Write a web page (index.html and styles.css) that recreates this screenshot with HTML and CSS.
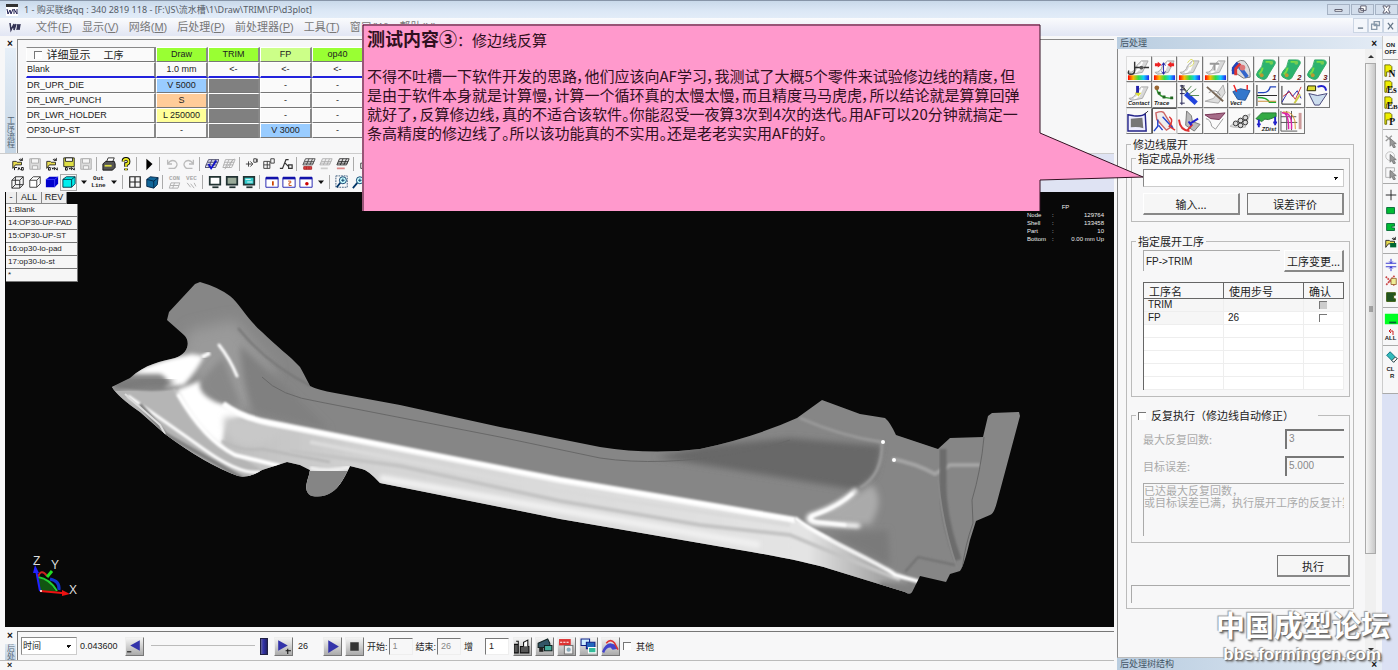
FILE: index.html
```html
<!DOCTYPE html>
<html lang="zh-CN">
<head>
<meta charset="utf-8">
<title>d3plot</title>
<link rel="stylesheet" href="styles.css">
</head>
<body>
<svg class="defs" aria-hidden="true">
  <defs>
    <symbol id="open" viewBox="0 0 16 16"><path d="M2 5h4l1 1h5v3H5L2 13z" fill="#e8dc50" stroke="#222"/><path d="M9 3q3-2 4 1m0-3v3h-3" fill="none" stroke="#222"/></symbol>
    <symbol id="save" viewBox="0 0 16 16"><path d="M2 2h12v12H2z" fill="#ddd" stroke="#aaa"/><path d="M4 2h8v5H4zM5 10h6v4H5z" fill="#f6f6f6" stroke="#aaa"/></symbol>
    <symbol id="down" viewBox="0 0 16 16"><path d="M2 5h12l-6 7z" fill="#111"/></symbol>
    <symbol id="flag" viewBox="0 0 16 16"><path d="M1 14V1h6l2 2v6H3v5z" fill="#ee0" stroke="#660"/></symbol>
    <symbol id="cursor" viewBox="0 0 16 16"><path d="M7 5l7 6-3 0 2 4-2 1-2-4-2 2z" fill="#999" stroke="#777"/></symbol>
    <symbol id="mon" viewBox="0 0 16 16"><path d="M2 2h12v9H2z" fill="currentColor" stroke="#233" stroke-width="2"/><path d="M5 14h7" stroke="#233" stroke-width="2"/></symbol>
    <symbol id="win" viewBox="0 0 16 16"><path d="M1 3h14v11H1z" fill="#fff" stroke="#11a"/><path d="M1 2h14v3H1z" fill="#11a"/></symbol>
    <symbol id="mesh" viewBox="0 0 16 16"><path d="M4 2h11l-3 7H1zM3 5h11M2 7h11M8 2L5 9M12 2L9 9" fill="none" stroke="currentColor"/></symbol>
    <symbol id="blob" viewBox="0 0 24 24"><path d="M9 2h8q5 0 4 4-5 8-9 15-2 2-5 1l-4-2q-3-2 0-6 5-4 6-12z" fill="#2cb36f" stroke="#3a6"/><path d="M11 4h7M8 10q-1 5-4 7" stroke="#7d4" stroke-width="2" fill="none"/><circle cx="17" cy="5" r="2" fill="#7c5"/><circle cx="7" cy="18" r="2" fill="#b93"/></symbol>
    <symbol id="sheet" viewBox="0 0 24 24"><path d="M2 15q6 0 8-7l5-5h7l-6 12-11 2z" fill="#d8d8d8" stroke="#aaa"/><path d="M13 7q-1 8-6 8M16 4l-4 9" fill="none" stroke="#fff" stroke-width="2"/></symbol>
    <linearGradient id="rain"><stop offset="0" stop-color="#f00"/><stop offset=".25" stop-color="#fb0"/><stop offset=".5" stop-color="#3d4"/><stop offset=".75" stop-color="#1cf"/><stop offset="1" stop-color="#22e"/></linearGradient>
    <symbol id="bar" viewBox="0 0 24 24"><path d="M1 18h22v5H1z" fill="url(#rain)"/></symbol>
  </defs>
</svg>

<header class="titlebar">
  <svg class="logo" viewBox="0 0 12 12"><path d="M0 0h12v12H0z" fill="#fff"/><path d="M0 0h12v3H0z" fill="#333"/><path d="M1 5l1 5 2-4 1 4 2-5M8 10V5l3 5V5" fill="none" stroke="#225"/></svg>
  <h1>1 - 购买联络qq : 340 2819 118 - [F:\JS\流水槽\1\Draw\TRIM\FP\d3plot]</h1>
  <div class="winbtns">
    <button aria-label="最小化"><svg viewBox="0 0 12 10"><path d="M2 5h8v2H2z" fill="#fff" stroke="#556"/></svg></button>
    <button aria-label="还原"><svg viewBox="0 0 12 10"><path d="M4 1h6v5H4zM2 4h5v4H2z" fill="#fff" stroke="#556"/></svg></button>
    <button aria-label="关闭"><svg viewBox="0 0 12 10"><path d="M2 1h3l1 2 1-2h3L8 5l2 4H7L6 7 5 9H2l2-4z" fill="#fff" stroke="#556"/></svg></button>
  </div>
</header>

<nav class="menubar">
  <svg class="logo" viewBox="0 0 12 12"><path d="M1 2l1 7 3-6v6l2-6M8 9l1-6 1 6 1-6" fill="none" stroke="#335" stroke-width="1.5"/></svg>
  <button>文件(<u>F</u>)</button><button>显示(<u>V</u>)</button><button>网络(<u>M</u>)</button><button>后处理(<u>P</u>)</button><button>前处理器(<u>P</u>)</button><button>工具(<u>T</u>)</button><button>窗口(<u>W</u>)</button><button>帮助(<u>H</u>)</button>
  <div class="mdibtns">
    <button aria-label="最小化子窗口"><svg viewBox="0 0 10 10"><path d="M3 7h4" stroke="#678"/></svg></button>
    <button aria-label="还原子窗口"><svg viewBox="0 0 10 10"><path d="M4 2h4v3H4zM2 4h4v4H2z" fill="#fff" stroke="#89a"/></svg></button>
    <button aria-label="关闭子窗口"><svg viewBox="0 0 10 10"><path d="M3 3l4 5M7 3L3 8" stroke="#678"/></svg></button>
  </div>
</nav>

<div class="workspace">
  <main class="main">
    <section class="process">
      <div class="grip"><button class="x" aria-label="关闭">×</button><span class="vert">工序流程</span></div>
      <div class="sheet">
        <table class="proc">
          <thead><tr><th><label><input type="checkbox" class="chk"> 详细显示</label><span>工序</span></th><th class="g">Draw</th><th class="g">TRIM</th><th class="lg">FP</th><th class="g">op40</th></tr></thead>
          <tbody>
            <tr class="first"><td>Blank</td><td>1.0 mm</td><td>&lt;-</td><td>&lt;-</td><td>&lt;-</td></tr>
            <tr><td>DR_UPR_DIE</td><td class="b">V 5000</td><td class="d"></td><td>-</td><td>-</td></tr>
            <tr><td>DR_LWR_PUNCH</td><td class="o">S</td><td class="d"></td><td>-</td><td>-</td></tr>
            <tr><td>DR_LWR_HOLDER</td><td class="y">L 250000</td><td class="d"></td><td>-</td><td>-</td></tr>
            <tr><td>OP30-UP-ST</td><td>-</td><td class="d"></td><td class="b">V 3000</td><td>-</td></tr>
          </tbody>
        </table>
      </div>
    </section>

    <div class="toolbars">
      <div class="toolbar">
        <button aria-label="打开CAD"><svg viewBox="0 0 16 16"><use href="#open"/><path d="M4 15v-3h3M8 15l1-3 2 3M12 12h2v3h-2z" fill="none" stroke="#000"/></svg></button>
        <button aria-label="保存CAD"><svg viewBox="0 0 16 16"><use href="#save"/></svg></button>
        <button aria-label="打开DYN"><svg viewBox="0 0 16 16"><use href="#open"/><path d="M4 12h2v3H4zM8 12l1 2 1-2M11 15v-3l3 3v-3" fill="none" stroke="#000"/></svg></button>
        <button aria-label="保存DYN"><svg viewBox="0 0 16 16"><path d="M2 1h12v10H2z" fill="#dd4" stroke="#222"/><path d="M4 1h8v4H4z" fill="#fff" stroke="#222"/><path d="M4 12h2v3H4zM8 12l1 2 1-2M11 15v-3l3 3v-3" fill="none" stroke="#000"/></svg></button>
        <button aria-label="保存"><svg viewBox="0 0 16 16"><use href="#save"/></svg></button><i></i>
        <button aria-label="打印"><svg viewBox="0 0 16 16"><path d="M5 6l2-5h7l-2 5z" fill="#fff" stroke="#222"/><path d="M1 8l3-3h10l1 3v4l-3 3H1z" fill="#555" stroke="#111"/><path d="M3 10h8" stroke="#dd4" stroke-width="2"/></svg></button>
        <button aria-label="帮助"><svg viewBox="0 0 16 16"><path d="M5 5q0-3 3-3t3 3-3 3v3M8 13v2" fill="none" stroke="#000" stroke-width="4"/><path d="M5 5q0-3 3-3t3 3-3 3v3M8 13v2" fill="none" stroke="#ee2" stroke-width="2"/></svg></button><i></i>
        <button aria-label="运行"><svg viewBox="0 0 16 16"><path d="M5 2l7 6-7 7z"/></svg></button><i></i>
        <button aria-label="撤销"><svg viewBox="0 0 16 16"><path d="M3 3v5h5M3 8q4-6 9-3 4 4-1 8H4" fill="none" stroke="#bbb" stroke-width="1.5"/></svg></button>
        <button aria-label="重做"><svg viewBox="0 0 16 16"><path d="M13 3v5H8M13 8Q9 2 4 5q-4 4 1 8h7" fill="none" stroke="#bbb" stroke-width="1.5"/></svg></button><i></i>
        <button aria-label="网格检查"><svg viewBox="0 0 16 16"><path d="M4 3h12l-4 9H0zM3 6h12M1 9h12M8 3l-4 9M12 3L8 12" fill="#dde" stroke="#446"/><path d="M4 8l3 5 6-9" fill="none" stroke="#11c" stroke-width="2"/></svg></button>
        <button aria-label="网格"><svg viewBox="0 0 16 16"><path d="M4 3h11l-4 9H1zM3 6h11M2 9h11M8 3l-4 9M12 3L8 12M3 14L14 2" fill="none" stroke="#aaa"/></svg></button><i></i>
        <button aria-label="移动点"><svg viewBox="0 0 16 16"><path d="M1 8h7M6 5l3 3-3 3M4 5v6M10 2h3v4h-3zM14 2v4" fill="none" stroke="#333"/></svg></button>
        <button aria-label="移动面"><svg viewBox="0 0 16 16"><path d="M2 5h7v8H2zM2 9h7M6 5v8M10 2h4v5h-4z" fill="none" stroke="#333"/></svg></button>
        <button aria-label="移动线"><svg viewBox="0 0 16 16"><path d="M1 13h3L8 3h3M7 7l4 4M11 9h4v4h-4z" fill="none" stroke="#333" stroke-width="1.4"/></svg></button><i></i>
        <button aria-label="红网格"><svg viewBox="0 0 16 16"><g color="#444"><use href="#mesh"/></g><path d="M2 11h9v3H2zM5 11v3M8 11v3" fill="#d44" stroke="#a22"/></svg></button>
        <button aria-label="灰网格"><svg viewBox="0 0 16 16"><g color="#aaa"><use href="#mesh"/></g><path d="M2 12h8v2H2z" fill="#ccc"/></svg></button>
        <button aria-label="粉网格"><svg viewBox="0 0 16 16"><g color="#222"><use href="#mesh"/></g><path d="M1 12h9v2H1z" fill="#d88"/></svg></button><i></i>
        <button aria-label="锁"><svg viewBox="0 0 16 16"><path d="M4 7V3h6v4M2 7h11v6H2z" fill="none" stroke="#333"/></svg></button>
      </div>
      <div class="toolbar">
        <button aria-label="线框"><svg viewBox="0 0 16 16"><path d="M1 6h9v9H1zM5 2h9v9H5zM1 6l4-4M10 6l4-4M10 15l4-4M1 15l4-4" fill="none" stroke="#222"/></svg></button>
        <button aria-label="消隐"><svg viewBox="0 0 16 16"><path d="M2 6h8v8H2zM2 6l4-4h8l-4 4M14 2v8l-4 4" fill="#fff" stroke="#333"/></svg></button>
        <button aria-label="着色"><svg viewBox="0 0 16 16"><path d="M1 5l4-3h10v8l-4 4H1z" fill="#00c"/><path d="M1 5h10v9M11 5l4-3" fill="none" stroke="#44f"/></svg></button>
        <button class="on" aria-label="着色边"><svg viewBox="0 0 16 16"><path d="M1 5l4-3h10v8l-4 4H1z" fill="#0ee" stroke="#034"/><path d="M1 5h10v9M11 5l4-3" fill="none" stroke="#034"/></svg></button>
        <button class="arr" aria-label="更多着色"><svg viewBox="0 0 16 16"><use href="#down"/></svg></button>
        <button class="txt">Out<br>Line</button>
        <button class="arr" aria-label="更多轮廓"><svg viewBox="0 0 16 16"><use href="#down"/></svg></button><i></i>
        <button aria-label="四视图"><svg viewBox="0 0 16 16"><path d="M2 2h12v12H2zM8 2v12M2 8h12" fill="none" stroke="#222" stroke-width="1.4"/></svg></button>
        <button aria-label="透视"><svg viewBox="0 0 16 16"><path d="M2 5l4-3 9 1-1 8-4 4-8-2z" fill="#169" stroke="#024"/><path d="M2 5l8 2v8M10 7l5-4" fill="none" stroke="#024"/></svg></button><i></i>
        <button class="txt off">CON<svg viewBox="0 0 14 8"><path d="M3 1h10l-2 6H1zM2 4h10M7 1L5 7" fill="none" stroke="#aaa"/></svg></button>
        <button class="txt off">VEC<svg viewBox="0 0 14 8"><path d="M2 1l4 5M6 2l4 5M10 1l2 4" fill="none" stroke="#aaa"/></svg></button><i></i>
        <button aria-label="屏幕1"><svg viewBox="0 0 16 16" color="#fff"><use href="#mon"/></svg></button>
        <button aria-label="屏幕2"><svg viewBox="0 0 16 16" color="#9a9"><use href="#mon"/></svg></button>
        <button aria-label="屏幕3"><svg viewBox="0 0 16 16" color="#3cc"><use href="#mon"/><path d="M4 5h6M6 8h6" stroke="#fff"/></svg></button><i></i>
        <button aria-label="窗口1"><svg viewBox="0 0 16 16"><use href="#win"/><path d="M9 7v5" stroke="#c40" stroke-width="2"/></svg></button>
        <button aria-label="窗口2"><svg viewBox="0 0 16 16"><use href="#win"/><path d="M7 7h3v2H8v3h3" fill="none" stroke="#c40"/></svg></button>
        <button aria-label="窗口录制"><svg viewBox="0 0 16 16"><use href="#win"/><circle cx="9" cy="10" r="2" fill="#c00"/></svg></button>
        <button class="arr" aria-label="更多窗口"><svg viewBox="0 0 16 16"><use href="#down"/></svg></button><i></i>
        <button aria-label="缩放窗口"><svg viewBox="0 0 16 16"><path d="M1 1h13v13H1z" fill="none" stroke="#357" stroke-dasharray="2 1"/><circle cx="9" cy="6" r="4" fill="#cff" stroke="#036"/><path d="M6 9l-4 5" stroke="#036" stroke-width="2"/><path d="M7 6h4M9 4v4" stroke="#036"/></svg></button>
        <button aria-label="放大"><svg viewBox="0 0 16 16"><circle cx="9" cy="6" r="4" fill="#cff" stroke="#036"/><path d="M6 9l-5 6" stroke="#036" stroke-width="2"/><path d="M7 6h4M9 4v4" stroke="#036"/></svg></button>
      </div>
    </div>

    <section class="viewport">
      <svg class="model" viewBox="5 192 1109 435" preserveAspectRatio="xMinYMin meet" role="img" aria-label="零件模型">
        <defs>
          <clipPath id="part"><path d="M200 282Q218 287 230 296C240 304 246 318 262 332C276 346 290 356 300 367Q304 374 310 386Q318 390 335 393L400 405L500 427L560 439L600 447Q650 455 700 449Q755 437 797 418L822 400L860 414L885 418Q890 422 896 435L938 449L950 438L983 437L988 416L992 413L1019 412L1020 416L997 502Q994 514 990 515L976 521L970 540Q964 566 960 571L950 574L946 582L920 576L912 592Q910 595 905 592L830 569Q800 560 740 550L560 519L380 483Q368 470 362 469L350 466C343 480 335 500 312 496C305 493 305 487 309 475L310 470L300 465L287 462L262 470Q250 478 238 476Q205 464 165 434L140 412Q118 397 112 387L130 378C145 364 162 361 175 358C190 353 190 340 184 335L167 320L169 312L195 284Z"/></clipPath>
          <filter id="b1" x="-20%" y="-20%" width="140%" height="140%"><feGaussianBlur stdDeviation="1"/></filter>
          <filter id="b2" x="-20%" y="-20%" width="140%" height="140%"><feGaussianBlur stdDeviation="2"/></filter>
          <filter id="b3" x="-30%" y="-50%" width="160%" height="200%"><feGaussianBlur stdDeviation="3"/></filter>
          <filter id="b7" x="-30%" y="-30%" width="160%" height="160%"><feGaussianBlur stdDeviation="7"/></filter>
          <linearGradient id="low"><stop offset="0" stop-color="#bbb"/><stop offset=".25" stop-color="#d4d4d4"/><stop offset=".85" stop-color="#e4e4e4"/><stop offset="1" stop-color="#888"/></linearGradient>
        </defs>
        <g clip-path="url(#part)" fill="none">
          <path d="M100 270h940v340H100z" fill="#868686"/>
          <path d="M190 330l45-10 40 50-30 45-45-30-20-30z" fill="#9a9a9a" filter="url(#b7)"/>
          <path d="M240 345Q242 390 255 412L330 430 300 400z" fill="#808080" filter="url(#b3)"/>
          <path d="M705 446l85-8 92 8-6 28-20 16-90-15q-60-10-110-18z" fill="#686868" filter="url(#b3)"/>
          <path d="M222 400Q240 417 270 424L560 481L795 520L905 575L915 610L560 530L380 490L250 490L200 420z" fill="url(#low)" filter="url(#b1)"/>
          <path d="M110 385Q150 395 175 388L220 445L270 475L220 490L120 420z" fill="#b5b5b5" filter="url(#b1)"/>
          <path d="M130 374Q155 360 192 354L204 356Q196 372 184 385L164 387Q172 380 160 374z" fill="#fff" filter="url(#b2)"/>
          <path d="M112 388Q145 380 172 383" stroke="#787878" stroke-width="8" filter="url(#b3)"/>
          <path d="M199 386q8-14 24-28l18 47-22 2z" fill="#888" filter="url(#b3)"/>
          <path d="M176 390L200 381Q196 396 226 406L242 418Q224 416 222 446Q196 430 176 390z" fill="#fff" filter="url(#b2)"/>
          <path d="M224 417Q250 418 290 428Q265 448 244 446Q226 440 224 425z" fill="#c8c8c8" filter="url(#b3)"/>
          <path d="M178 394Q205 440 235 455L280 466" stroke="#fff" stroke-width="4" filter="url(#b1)"/>
          <path d="M222 441Q240 452 262 449L330 462" stroke="#bababa" stroke-width="3" filter="url(#b1)"/>
          <path d="M128 396Q170 425 205 450T260 472" stroke="#fff" stroke-width="3" filter="url(#b1)"/>
          <path d="M140 404L165 434L245 480" stroke="#808080" stroke-width="4" filter="url(#b1)"/>
          <path d="M125 394L160 425L165 434" stroke="#ddd" stroke-width="2"/>
          <path d="M223 404Q240 417 270 423L560 480L720 507L795 520" stroke="#fff" stroke-width="6" filter="url(#b1)"/>
          <path d="M290 451L400 466L560 501L700 525L790 535Q850 560 900 580" stroke="#c4c4c4" stroke-width="4" filter="url(#b1)"/>
          <path d="M310 442L560 491L790 525" stroke="#dadada" stroke-width="4" filter="url(#b1)"/>
          <path d="M380 478L560 510L760 545" stroke="#f0f0f0" stroke-width="7" filter="url(#b2)"/>
          <path d="M219 345Q230 359 237 376" stroke="#fff" stroke-width="3" stroke-linecap="round" filter="url(#b1)"/>
          <path d="M202 357l8-4" stroke="#fff" stroke-width="4" filter="url(#b1)"/>
          <path d="M238 328Q268 365 311 386" stroke="#757575" stroke-width="2" filter="url(#b1)"/>
          <path d="M262 377Q280 396 320 402L500 437L600 458Q660 467 740 453Q770 447 790 440" stroke="#686868" stroke-width="1"/>
          <path d="M310 468Q330 473 350 467" stroke="#eee" stroke-width="4" filter="url(#b1)"/>
          <path d="M309 471L348 471L340 500L300 500z" fill="#858585"/>
          <path d="M813 520Q845 523 870 525Q886 500 872 485L850 498z" fill="#aaa" filter="url(#b3)"/>
          <path d="M800 418Q840 436 882 442Q883 475 860 488" stroke="#9a9a9a" stroke-width="3" filter="url(#b1)"/>
          <path d="M855 491Q840 506 810 516Q806 521 816 523L858 526" stroke="#fff" stroke-width="5" stroke-linecap="round" filter="url(#b2)"/>
          <path d="M852 494Q838 507 812 516Q808 521 818 522L845 525" stroke="#fff" stroke-width="3" stroke-linecap="round" filter="url(#b1)"/>
          <path d="M795 518Q810 530 850 550T895 575L920 582" stroke="#fff" stroke-width="4" filter="url(#b1)"/>
          <path d="M830 535L888 530 890 566z" fill="#7a7a7a" filter="url(#b3)"/>
          <path d="M894 460V572" stroke="#767676" stroke-width="3" filter="url(#b1)"/>
          <path d="M892 459Q915 463 935 474L950 465H980" stroke="#a4a4a4" stroke-width="4" filter="url(#b1)"/>
          <circle cx="883" cy="442" r="2" fill="#fff"/><circle cx="894" cy="460" r="2" fill="#fff"/>
          <path d="M943 449V482Q942 515 958 560" stroke="#6c6c6c" stroke-width="7" filter="url(#b1)"/>
          <path d="M938 480Q942 525 957 568" stroke="#888" stroke-width="2"/>
          <path d="M984 437Q981 470 972 500L973 523Q965 545 962 570" stroke="#666" stroke-width="1"/>
          <path d="M905 572L918 557L955 565" stroke="#707070" stroke-width="2" filter="url(#b1)"/>
          <path d="M880 582l38 3-10 12-30-8z" fill="#808080" filter="url(#b2)"/>
        </g>
        <g fill="none">
          <path d="M40 591l-2-13q10 0 18 14z" fill="#151"/>
          <path d="M38 577q12 2 19 14" stroke="#2c3" stroke-width="2"/>
          <path d="M38 577q3-9 9-1" stroke="#c22" stroke-width="2"/>
          <path d="M50 579q10 2 9 11" stroke="#13c" stroke-width="3"/>
          <path d="M40 591l-4-21" stroke="#22f" stroke-width="2"/><path d="M33 573l2-8 4 8z" fill="#22f"/>
          <path d="M47 577l5-6" stroke="#2d2" stroke-width="3"/>
          <path d="M40 591l22 2" stroke="#e11" stroke-width="2"/><path d="M62 590l8 4-8 2z" fill="#e11"/>
          <circle cx="41" cy="591" r="1" fill="#fff"/>
        </g>
        <g class="axis"><text x="33" y="565">Z</text><text x="51" y="569">Y</text><text x="69" y="594">X</text></g>
      </svg>
      <div class="parts">
        <div class="tabs"><button>-</button><button>ALL</button><button>REV</button></div>
        <ul><li>1:Blank</li><li>14:OP30-UP-PAD</li><li>15:OP30-UP-ST</li><li>16:op30-lo-pad</li><li>17:op30-lo-st</li><li>*</li></ul>
      </div>
      <div class="stats">
        <p>FP</p>
        <dl><dt>Node</dt><dd>:</dd><dd>129764</dd><dt>Shell</dt><dd>:</dd><dd>133458</dd><dt>Part</dt><dd>:</dd><dd>10</dd><dt>Bottom</dt><dd>:</dd><dd>0.00 mm Up</dd></dl>
      </div>
    </section>

    <section class="timeline">
      <div class="grip"><button class="x" aria-label="关闭">×</button><span class="vert">后处</span></div>
      <div class="controls">
        <select aria-label="显示方式"><option>时间</option></select>
        <span class="time">0.043600</span>
        <button aria-label="后退"><svg viewBox="0 0 16 16"><path d="M13 2v10L4 7z" fill="#33a"/><path d="M1 13h4" stroke="#111"/></svg></button>
        <input type="range" min="1" max="26" value="26" aria-label="步">
        <button aria-label="前进"><svg viewBox="0 0 16 16"><path d="M3 2v10l9-5z" fill="#33a"/><path d="M10 12h5M12 10v5" stroke="#111"/></svg></button>
        <span class="step">26</span>
        <button aria-label="播放"><svg viewBox="0 0 16 16"><path d="M4 2v12l10-6z" fill="#33a"/></svg></button>
        <button aria-label="停止"><svg viewBox="0 0 16 16"><path d="M4 4h8v8H4z" fill="#333"/></svg></button>
        <label>开始:<input class="num" value="1" disabled></label>
        <label>结束:<input class="num" value="26" disabled></label>
        <label class="inc">增<input class="num" value="1"></label>
        <button aria-label="录像"><svg viewBox="0 0 16 16"><path d="M0 6h4v8H0zM6 8h8v6H6z" fill="#555" stroke="#111"/><path d="M9 8V4l4-2v6M2 3h2v3" fill="#fff" stroke="#111"/></svg></button>
        <button aria-label="拍摄"><svg viewBox="0 0 16 16"><path d="M2 5l9-4 2 4v4H2z" fill="#356" stroke="#122"/><path d="M8 7h7v5H8z" fill="#4a9" stroke="#122"/><path d="M3 9h4v4H3z" fill="#222"/></svg></button>
        <button aria-label="导出"><svg viewBox="0 0 16 16"><path d="M1 1h11v6H1z" fill="#d33"/><path d="M2 4h9" stroke="#fff" stroke-dasharray="2 1"/><path d="M6 7h8v8H6z" fill="#eee" stroke="#777"/><circle cx="10" cy="11" r="2" fill="#8ab"/></svg></button>
        <button aria-label="窗口"><svg viewBox="0 0 16 16"><path d="M1 1h8v6H1z" fill="#cef" stroke="#128"/><path d="M6 4h8v6H6z" fill="#26b" stroke="#128"/><path d="M8 9h7v5H8z" fill="#3b9" stroke="#fff"/></svg></button>
        <button aria-label="曲线"><svg viewBox="0 0 16 16"><path d="M0 13Q3 5 8 5l4 1 3 4-5 1-2-2q-4 0-6 5z" fill="#44c"/><path d="M4 5q4-5 8 0l3 6" fill="none" stroke="#d33" stroke-width="1.5"/></svg></button>
        <label class="other"><input type="checkbox" class="chk">其他</label>
      </div>
    </section>
    <div class="below"><span>×</span></div>
  </main>

  <aside class="dock">
    <header class="dockhead"><h2>后处理</h2><button class="x" aria-label="关闭">×</button></header>
    <div class="dockbody">
      <div class="panel">
        <div class="iconsgrid">
          <button aria-label="厚度"><svg viewBox="0 0 24 24"><use href="#sheet"/><path d="M8 4v9q0 4-4 4t-2-4M8 10h6M17 10h6" fill="none" stroke="#333" stroke-width="1.5"/><circle cx="15" cy="10" r="2" fill="#555"/><use href="#bar"/></svg></button>
          <button aria-label="应变"><svg viewBox="0 0 24 24"><use href="#sheet"/><path d="M2 7h4M18 7h4" stroke="#e22" stroke-width="3"/><path d="M5 4l4 3-4 3zM19 4l-4 3 4 3z" fill="#e22"/><path d="M11 5v12M9 8l2-3 2 3M9 14l2 3 2-3" fill="none" stroke="#22a"/><use href="#bar"/></svg></button>
          <button aria-label="应力"><svg viewBox="0 0 24 24"><use href="#sheet"/><path d="M10 5q4-6 6-2t-4 6" fill="none" stroke="#dd6"/><use href="#bar"/></svg></button>
          <button aria-label="位移"><svg viewBox="0 0 24 24"><use href="#sheet"/><path d="M6 6h10M11 6v7" stroke="#999" stroke-width="2"/><use href="#bar"/></svg></button>
          <button aria-label="云图"><svg viewBox="0 0 24 24"><path d="M3 13Q8 0 16 3q7 7 6 17l-7 1z" fill="#ddd" stroke="#777"/><path d="M3 17V10l5-6 4 3-4 5v5z" fill="#24b"/><path d="M7 18v-7l5-5" fill="none" stroke="#d33" stroke-width="3"/><path d="M11 9l8 11" stroke="#36c" stroke-width="4"/><circle cx="14" cy="10" r="3" fill="#d77"/></svg></button>
          <button aria-label="成形1"><svg viewBox="0 0 24 24"><use href="#blob"/><text class="digit" x="18" y="23">1</text></svg></button>
          <button aria-label="成形2"><svg viewBox="0 0 24 24"><use href="#blob"/><text class="digit" x="18" y="23">2</text></svg></button>
          <button aria-label="成形3"><svg viewBox="0 0 24 24"><use href="#blob"/><text class="digit" x="18" y="23">3</text></svg></button>
          <button aria-label="接触"><svg viewBox="0 0 24 24"><use href="#sheet"/><path d="M11 2v8" stroke="#22a" stroke-width="3"/><path d="M8 9h7l-3 4z" fill="#dd3"/><text x="1" y="22">Contact</text></svg></button>
          <button aria-label="轨迹"><svg viewBox="0 0 24 24"><path d="M4 4q0 11 17 11" fill="none" stroke="#393" stroke-width="1.5"/><circle cx="4" cy="4" r="2.5" fill="#963"/><path d="M5 8h3v3H5zM10 12h3v3h-3zM18 13h3v3h-3z" fill="#262"/><text x="1" y="22">Trace</text></svg></button>
          <button aria-label="切线"><svg viewBox="0 0 24 24"><path d="M4 1v21M2 2h5M2 6h5M2 10h5M2 20h5" stroke="#225"/><path d="M4 3l8 9M4 1l9 12" stroke="#333"/><path d="M8 10l11 10" stroke="#24d" stroke-width="5"/><path d="M8 9l6-7M11 11l8-6M12 12h10" stroke="#585"/></svg></button>
          <button aria-label="截面"><svg viewBox="0 0 24 24"><path d="M1 18l9-3L20 1l2 8-7 11z" fill="#ddd" stroke="#aaa"/><path d="M3 3l17 15" stroke="#765" stroke-width="2"/><path d="M5 9q8-5 12 3" fill="none" stroke="#888"/></svg></button>
          <button aria-label="矢量"><svg viewBox="0 0 24 24"><path d="M4 8l8-3 10 2-5 10-8-1z" fill="#37c" stroke="#259"/><path d="M8 8L5 1M19 6V1" stroke="#e22" stroke-width="1.5"/><text x="1" y="22">Vect</text></svg></button>
          <button aria-label="曲线"><svg viewBox="0 0 24 24"><path d="M2 1v22M2 12h21" stroke="#222"/><path d="M3 9h6q5 0 7-6h6" fill="none" stroke="#24b" stroke-width="1.5"/><path d="M3 14q10 0 12 5h7" fill="none" stroke="#2a3" stroke-width="1.5"/><path d="M3 18h19" stroke="#c83"/></svg></button>
          <button aria-label="图表"><svg viewBox="0 0 24 24"><path d="M2 2v19h20" fill="none" stroke="#222"/><path d="M2 19l7-12 4 6 5-6 4 8" fill="none" stroke="#22a"/><path d="M3 13l7-5 6 8 6-13" fill="none" stroke="#c33"/><path d="M15 20l6-9" stroke="#cc4" stroke-width="2"/></svg></button>
          <button aria-label="导入"><svg viewBox="0 0 24 24"><path d="M2 2h8v5H1z" fill="#dd3" stroke="#220"/><path d="M12 3q8-3 9 4" fill="none" stroke="#22c" stroke-width="2"/><path d="M3 10l9 2 10-2-8 12-5 0z" fill="#cde" stroke="#447"/></svg></button>
          <button aria-label="边界"><svg viewBox="0 0 24 24"><path d="M1 5l6 1q9 1 12-2l1 18H1z" fill="#eef" stroke="#228" stroke-width="1.5"/><path d="M4 9l12-1 1 11q-5-2-13-1z" fill="#777"/><path d="M19 4l3-3" stroke="#333"/></svg></button>
          <button class="on" aria-label="修边线"><svg viewBox="0 0 24 24"><path d="M3 3q8-3 9 1l8 13-6 4L4 10z" fill="#eee" stroke="#c66" stroke-width="1.5"/><path d="M5 10v7l-4 5M6 16l4 5M10 7l11 12" fill="none" stroke="#24c" stroke-width="1.5"/><path d="M17 7q5 4 0 10l6 4" fill="none" stroke="#d33" stroke-width="1.5"/></svg></button>
          <button aria-label="翻边"><svg viewBox="0 0 24 24"><path d="M9 1l5 5 1 6 8 3-6 7-9-6z" fill="#bbb" stroke="#777"/><path d="M1 10q1 11 11 12M10 21l5-6" fill="none" stroke="#d33" stroke-width="2"/><path d="M21 9l-8 5M11 12l3 4" stroke="#22c" stroke-width="2"/></svg></button>
          <button aria-label="毛坯"><svg viewBox="0 0 24 24"><path d="M1 5l11-1 10-1-6 7-9-1z" fill="#a56b88" stroke="#735"/><path d="M2 9q5 1 6 8l4 3 8-11" fill="none" stroke="#999"/></svg></button>
          <button aria-label="管材"><svg viewBox="0 0 24 24"><path d="M1 17l8-6 13-7-5 14H5z" fill="#ddd" stroke="#bbb"/><g fill="none" stroke="#333"><circle cx="7" cy="14" r="2.5"/><circle cx="12" cy="11" r="2.5"/><circle cx="17" cy="8" r="2.5"/><circle cx="12" cy="16" r="2.5"/><circle cx="17" cy="13" r="2.5"/></g></svg></button>
          <button aria-label="Z距离"><svg viewBox="0 0 24 24"><path d="M1 9l6-6h15v4l-8 3q-4-2-7 2z" fill="#3a4" stroke="#273"/><path d="M4 10v8M21 7v9M2 15h4M19 13h4" stroke="#22c" stroke-width="2"/><text x="7" y="22">ZDist</text></svg></button>
          <button aria-label="FLD"><svg viewBox="0 0 24 24"><path d="M1 1v21h17M1 7h16M1 13h17M7 1v20M12 1v20" fill="none" stroke="#555"/><path d="M2 3q7-1 7 17M2 3q11-2 10 17" fill="none" stroke="#d2a" stroke-width="1.5"/><path d="M3 2q14-2 13 18" fill="none" stroke="#d93"/><path d="M21 3v17" stroke="#c99" stroke-width="3"/></svg></button>
        </div>

        <fieldset class="outer"><legend>修边线展开</legend>
          <fieldset class="g1"><legend>指定成品外形线</legend>
            <select aria-label="指定成品外形线"><option></option></select>
            <div class="row two"><button class="btn">输入...</button><button class="btn strong">误差评价</button></div>
          </fieldset>
          <fieldset class="g2"><legend>指定展开工序</legend>
            <div class="row"><input class="flow" value="FP-&gt;TRIM" aria-label="展开工序" readonly><button class="btn change">工序变更...</button></div>
            <table class="steps">
              <thead><tr><th>工序名</th><th>使用步号</th><th>确认</th></tr></thead>
              <tbody>
                <tr class="dim"><td>TRIM</td><td></td><td><input type="checkbox" class="chk grey" aria-label="确认TRIM" disabled></td></tr>
                <tr><td>FP</td><td>26</td><td><input type="checkbox" class="chk" aria-label="确认FP"></td></tr>
                <tr><td></td><td></td><td></td></tr><tr><td></td><td></td><td></td></tr><tr><td></td><td></td><td></td></tr><tr><td></td><td></td><td></td></tr><tr><td></td><td></td><td></td></tr>
              </tbody>
            </table>
          </fieldset>
          <fieldset class="g3"><legend><label><input type="checkbox" class="chk">反复执行（修边线自动修正）</label></legend>
            <label class="field">最大反复回数:<input value="3" disabled></label>
            <label class="field">目标误差:<input value="5.000" disabled></label>
            <div class="note">已达最大反复回数，<br>或目标误差已满，执行展开工序的反复计算</div>
          </fieldset>
          <button class="btn strong run">执行</button>
          <div class="status"></div>
        </fieldset>
      </div>
      <div class="scroll"><svg viewBox="0 0 8 8"><path d="M1 6l3-3 3 3z" fill="#333"/></svg><div class="thumb"><svg viewBox="0 0 8 8"><path d="M2 2h4M2 4h4M2 6h4" stroke="#666"/></svg></div><svg viewBox="0 0 8 8"><path d="M1 2l3 3 3-3z" fill="#333"/></svg></div>
    </div>
    <header class="dockhead"><h2>后处理树结构</h2><button class="x" aria-label="关闭">×</button></header>
  </aside>

  <div class="strip">
    <div class="stripbar">
      <button class="txt onoff">ON<br>OFF</button><hr>
      <button aria-label="节点"><svg viewBox="0 0 16 16"><use href="#flag"/><text x="5" y="15">N</text></svg></button>
      <button aria-label="壳单元"><svg viewBox="0 0 16 16"><use href="#flag"/><text x="3" y="15">Es</text></svg></button>
      <button aria-label="梁单元"><svg viewBox="0 0 16 16"><use href="#flag"/><text x="3" y="15">E<tspan class="small">B</tspan></text></svg></button>
      <button aria-label="零件"><svg viewBox="0 0 16 16"><use href="#flag"/><text x="6" y="15">P</text></svg></button><hr>
      <button aria-label="选择1"><svg viewBox="0 0 16 16"><path d="M2 2l8 7M9 2L2 8" stroke="#999" stroke-width="1.5"/><use href="#cursor"/></svg></button>
      <button aria-label="选择2"><svg viewBox="0 0 16 16"><circle cx="7" cy="7" r="5" fill="none" stroke="#bbb"/><use href="#cursor"/></svg></button>
      <button aria-label="选择3"><svg viewBox="0 0 16 16"><path d="M2 2h10v4H7v7H2z" fill="none" stroke="#aaa"/><use href="#cursor"/></svg></button><hr>
      <button aria-label="加"><svg viewBox="0 0 16 16"><path d="M8 2v12M2 8h12" stroke="#111"/></svg></button>
      <button aria-label="面"><svg viewBox="0 0 16 16"><path d="M3 4h9v7H3z" fill="#0b3" stroke="#063"/></svg></button>
      <button aria-label="部分面"><svg viewBox="0 0 16 16"><path d="M3 4h9v3H9v2h3v3H3z" fill="#0b3" stroke="#063"/></svg></button>
      <button aria-label="打开"><svg viewBox="0 0 16 16"><use href="#open"/><path d="M7 8h7v5H7z" fill="#063"/></svg></button><hr>
      <button aria-label="对称"><svg viewBox="0 0 16 16"><path d="M8 1v4M8 10v5M2 6h12M2 10h12M6 4l2 2 2-2M6 12l2-2 2 2" fill="none" stroke="#22c"/></svg></button>
      <button aria-label="散点"><svg viewBox="0 0 16 16"><path d="M2 3l10 10M12 2L2 13" stroke="#c44" stroke-dasharray="2 1" stroke-width="2"/><path d="M8 5h6v7H8z" fill="#ee9" stroke="#963"/></svg></button>
      <button aria-label="填充"><svg viewBox="0 0 16 16"><path d="M3 3h10v3h-2v4h2v3H3z" fill="#252" stroke="#350"/></svg></button><hr>
      <button aria-label="全部显示"><svg viewBox="0 0 16 16"><path d="M1 2h15v12H1z" fill="#0f2"/><path d="M6 12h8" stroke="#063" stroke-width="2"/></svg></button>
      <button class="txt all"><svg viewBox="0 0 12 7"><path d="M8 7V3H4M6 1L4 3l2 2" fill="none" stroke="#c22"/></svg>ALL</button><hr>
      <button aria-label="擦除"><svg viewBox="0 0 16 16"><path d="M3 6l4-4 8 8-4 4z" fill="#3bb" stroke="#067"/><path d="M9 12l4-4 2 2-4 4z" fill="#fff" stroke="#333"/></svg></button>
      <button class="txt">CL<br>&nbsp;&nbsp;R</button>
    </div>
  </div>
</div>

<aside class="callout">
  <svg viewBox="0 0 782 187" aria-hidden="true"><path d="M0 187V0H678V109L781 153L678 156V187z" fill="#ff99cc"/><path d="M1 187V1H678V109L781 153L678 156V187" fill="none" stroke="#312" /></svg>
  <div class="words">
    <h3><b>测试内容③</b>：修边线反算</h3>
    <p>不得不吐槽一下软件开发的思路，他们应该向AF学习，我测试了大概5个零件来试验修边线的精度，但<br>是由于软件本身就是计算慢，计算一个循环真的太慢太慢，而且精度马马虎虎，所以结论就是算算回弹<br>就好了，反算修边线，真的不适合该软件。你能忍受一夜算3次到4次的迭代。用AF可以20分钟就搞定一<br>条高精度的修边线了。所以该功能真的不实用。还是老老实实用AF的好。</p>
  </div>
</aside>
<div class="watermark"><strong>中国成型论坛</strong><span>bbs.formingcn.com</span></div>
</body>
</html>
```
FILE: styles.css
```css
* { box-sizing: border-box; }
body { margin: 0; height: 100vh; overflow: hidden; position: relative; display: flex; flex-direction: column; background: #f7f7f8; color: #222; font: 11px "Liberation Sans", "Noto Sans CJK SC", sans-serif; }
.defs { position: absolute; width: 0; height: 0; }
button, input, select { font: inherit; color: inherit; margin: 0; padding: 0; border: 0; border-radius: 0; background: none; }
h1, h2, h3, p, ul, dl, dd { margin: 0; padding: 0; font-weight: normal; }
svg { display: block; }

.titlebar { display: flex; align-items: center; gap: 6px; height: 18px; padding-left: 6px; background: linear-gradient(#c9d9ea, #dce8f6 60%, #e2ecf8); border-top: 1px solid #8795a8; }
.titlebar h1 { flex: 1; font: 9px "Noto Sans", "Noto Sans CJK SC", sans-serif; color: #555c66; }
.logo { width: 12px; height: 12px; }
.winbtns { display: flex; align-self: flex-start; padding-top: 3px; gap: 1px; }
.winbtns button { width: 23px; height: 11px; border: 1px solid #a5b2c4; background: #d3deec; display: grid; place-items: center; }
.winbtns svg { width: 11px; height: 9px; }
.menubar { display: flex; align-items: center; gap: 10px; height: 18px; padding-left: 9px; background: linear-gradient(#fafbfd, #e2e6f4); color: #777; }
.menubar .logo { margin-right: 5px; }
.menubar > button { font: 11px/16px "Liberation Sans", "Noto Sans CJK SC", sans-serif; white-space: nowrap; }
.mdibtns { display: flex; margin-left: auto; align-self: flex-start; }
.mdibtns button { width: 15px; height: 15px; border: 1px solid #ccd6e4; background: #f3f6fb; }

.workspace { flex: 1; min-height: 0; display: flex; }
.main { flex: 1; min-width: 0; display: flex; flex-direction: column; }
.process { display: flex; height: 117px; padding-top: 3px; }
.grip { width: 17px; flex: none; display: flex; flex-direction: column; align-items: center; justify-content: space-between; padding-left: 3px; color: #567; }
.vert { writing-mode: vertical-rl; font-size: 8px; line-height: 11px; background: linear-gradient(#dfe8f2, #bfd0e0); }
.process .vert { padding-top: 68px; flex: 1; overflow: hidden; background: linear-gradient(#e6eff8, #c5d5e4); }
.x { font: bold 10px/9px "Liberation Sans", sans-serif; color: #111; }
.sheet { flex: 1; border-top: 1px solid #888; border-left: 1px solid #888; padding: 7px 0 0 8px; }
.proc { border-collapse: separate; border-spacing: 0; table-layout: fixed; width: 338px; font: 9px/13px "Liberation Sans", "Noto Sans CJK SC", sans-serif; }
.proc th, .proc td { padding: 0; height: 15px; width: 52px; text-align: center; font-weight: normal; white-space: nowrap; border: 1px solid #fff; border-right: 2px solid #888; border-bottom: 1px solid #777; background: #fafafa; }
.proc th:first-child, .proc td:first-child { width: 130px; text-align: left; padding-left: 0; }
.proc th:first-child { font: 11px/13px "Noto Sans CJK SC", sans-serif; border-top-color: #888; padding-left: 7px; }
.proc th span { font-size: 10px; margin-left: 13px; }
.proc th label { margin: 0; }
.proc th .chk { margin-right: 2px; }
.proc .first td { border-bottom: 2px solid #2222dd; }
.proc .g { background: #99ff33; }
.proc .lg { background: #ccff88; }
.proc .b { background: #99ccff; }
.proc .o { background: #ffcc99; }
.proc .y { background: #ffff99; }
.proc .d { background: #808080; }
.chk { appearance: none; width: 8px; height: 8px; margin-right: 5px; border: 0 solid #777; border-top-width: 1px; border-left-width: 1px; background: #fff; vertical-align: 0; }
.chk.grey { background: #ccc; }
.chk:checked { background: #336; }

.toolbars { display: flex; flex-direction: column; height: 39px; padding: 1px 0 0 9px; border-top: 1px solid #ccc; background: linear-gradient(90deg, #f7f7f8 40%, #dfe3f3 85%); }
.toolbar { display: flex; align-items: center; height: 18px; }
.toolbar button { width: 17px; height: 17px; display: grid; place-items: center; flex: none; }
.toolbar svg { width: 14px; height: 14px; }
.toolbar .arr { width: 13px; }
.toolbar .arr svg { width: 8px; height: 8px; }
.toolbar .on { border: 1px solid #aaa; }
.toolbar i { width: 6px; height: 14px; flex: none; background: linear-gradient(90deg, transparent 2px, #aaa 2px, #aaa 3px, transparent 3px); }
.toolbar .txt { font: bold 6px/7px "Liberation Mono", monospace; align-content: center; }
.toolbar .txt svg { width: 13px; height: 7px; }
.toolbar .off { color: #aaa; }

.viewport { flex: 1; min-height: 0; position: relative; margin-left: 5px; background: #080808; overflow: hidden; }
.model { width: 100%; }
.axis { font: 12px "Liberation Sans", sans-serif; fill: #ddd; }
.parts { position: absolute; left: 1px; top: 0; width: 72px; font: 8px/12px "Liberation Sans", sans-serif; }
.tabs { display: flex; font-size: 9px; }
.tabs button { height: 12px; background: #eee; border: 1px solid #888; border-width: 0 1px 1px 0; width: 25px; line-height: 11px; }
.tabs button:first-child { width: 11px; }
.parts ul { list-style: none; background: #f6f6f6; }
.parts li { height: 13px; border-bottom: 1px solid #777; border-right: 1px solid #777; padding-left: 2px; white-space: nowrap; }
.stats { position: absolute; right: 10px; top: 11px; width: 77px; color: #eee; font: 6px/8px "Liberation Sans", sans-serif; }
.stats p { text-align: center; line-height: 8px; }
.stats dl { display: grid; grid-template-columns: 25px 8px 1fr; }
.stats dd:nth-of-type(even) { text-align: right; }

.timeline { display: flex; height: 34px; padding-top: 4px; border-bottom: 1px solid #bbb; }
.timeline .vert { padding: 0; }
.controls { flex: 1; border-top: 1px solid #777; border-left: 1px solid #777; display: flex; align-items: center; gap: 3px; padding: 0 0 0 3px; font: 9px "Liberation Sans", "Noto Sans CJK SC", sans-serif; }
.controls > * { flex: none; }
.controls button { width: 19px; height: 19px; background: linear-gradient(#f4f4f4, #aaa); border: 1px solid #eee; border-right: 1px solid #777; border-bottom: 1px solid #777; display: grid; place-items: center; }
.controls button svg { width: 17px; height: 17px; }
select { appearance: none; border: 1px solid #888; border-right-color: #ccc; border-bottom-color: #ccc; }
.controls select, .g1 select { background: linear-gradient(to bottom right, #111 50%, transparent 50%) no-repeat right 4px top 7px / 3px 3px, linear-gradient(to bottom left, #111 50%, transparent 50%) no-repeat right 7px top 7px / 3px 3px, #fff; }
.controls select { width: 56px; height: 18px; padding-left: 1px; }
.time { width: 42px; }
.controls input[type=range] { appearance: none; width: 117px; height: 17px; margin: 0 3px 0 4px; background: linear-gradient(#bbb, #bbb) no-repeat 0 7px / 104px 1px; }
.controls input[type=range]::-webkit-slider-thumb { appearance: none; width: 8px; height: 17px; background: linear-gradient(90deg, #669, #33a 40%, #226); border: 1px solid #224; }
.step { width: 24px; padding-left: 2px; }
.controls label { white-space: nowrap; display: flex; align-items: center; }
.num { width: 24px; height: 17px; margin-left: 1px; padding-left: 3px; border: 1px solid #eee; border-top-color: #777; border-left-color: #777; background: #fff; }
.num:disabled { background: #f7f7f8; color: #888; }
.inc .num { margin-left: 12px; margin-right: 1px; }
.below { height: 9px; font: bold 9px/9px "Liberation Sans", sans-serif; padding-left: 7px; overflow: hidden; flex: none; }

.dock { width: 265px; flex: none; margin: 1px 0 0 3px; display: flex; flex-direction: column; }
.dockhead { display: flex; align-items: center; justify-content: space-between; height: 12px; flex: none; padding: 0 5px 0 3px; background: linear-gradient(90deg, #b9cde0, #e3ebf5); color: #456; font-size: 9px; line-height: 12px; }
.dockhead h2 { font-size: 9px; line-height: 12px; }
.dockbody { flex: 1; min-height: 0; display: flex; border-left: 1px solid #888; border-bottom: 1px solid #bbb; }
.panel { flex: 1; min-width: 0; padding: 7px 11px 0 8px; }
.iconsgrid { display: grid; grid-template-columns: repeat(8, 1fr); width: 204px; }
.iconsgrid button { height: 26px; display: grid; place-items: center; background: #fafafa; border: 1px solid #ddd; border-right-color: #777; border-bottom-color: #777; }
.iconsgrid .on { border-color: #555 #ccc #ccc #555; }
.iconsgrid svg { width: 23px; height: 23px; }
.iconsgrid text { font: italic bold 6px "Liberation Sans", sans-serif; fill: #222; }
.iconsgrid .digit { font-size: 8px; fill: #611; }
fieldset { margin: 0; padding: 0; border: 1px solid #bbb; min-width: 0; }
legend { padding: 0 2px; margin-left: -7px; font: 11px/14px "Noto Sans CJK SC", sans-serif; color: #222; }
.outer { margin-top: 3px; padding: 0 3px 5px 4px; }
.outer > legend { margin-left: 0; }
.g1 { height: 71px; padding: 4px 5px 0 11px; }
.g1 select { display: block; width: 100%; height: 18px; }
.row { display: flex; gap: 4px; }
.two { margin-top: 6px; gap: 7px; }
.two .btn { flex: 1; }
.btn { height: 22px; background: #f6f6f6; border: 1px solid #fff; border-right: 2px solid #888; border-bottom: 2px solid #888; font: 11px/16px "Noto Sans CJK SC", sans-serif; white-space: nowrap; }
.btn.strong { border-top-color: #777; border-left-color: #777; }
.g2 { height: 163px; margin-top: 12px; padding: 2px 5px 0 11px; }
.flow { flex: 1; min-width: 0; height: 21px; padding-left: 2px; border-top: 1px solid #aaa; border-left: 1px solid #aaa; font: 10px "Liberation Sans", sans-serif; }
.change { width: 60px; }
.steps { width: 100%; margin-top: 10px; border-collapse: separate; border-spacing: 0; table-layout: fixed; background: #fff; font: 10px/12px "Liberation Sans", sans-serif; border-left: 1px solid #666; border-top: 1px solid #666; }
.steps th { height: 16px; padding: 0 0 0 5px; text-align: left; font: 11px/14px "Noto Sans CJK SC", sans-serif; background: #f7f7f8; border-right: 1px solid #666; border-bottom: 1px solid #666; width: 40%; }
.steps th:last-child { width: 20%; }
.steps td { height: 13px; padding: 0 0 0 4px; border: 0 solid #eee; border-width: 0 1px 1px 0; line-height: 12px; }
.steps td:last-child { padding-left: 15px; }
.steps .dim td, .steps td:first-child:not(:empty) { background: #f6f6f6; }
.steps .chk { display: block; }
.g3 { height: 135px; margin-top: 11px; padding: 7px 5px 0 11px; }
.g3 legend { width: 182px; }
.field { display: flex; align-items: flex-start; justify-content: space-between; height: 27px; color: #aaa; font: 11px/20px "Noto Sans CJK SC", sans-serif; }
.field input { width: 59px; height: 20px; padding: 0 0 3px 2px; border-top: 2px solid #777; border-left: 2px solid #777; color: #888; font: 10px "Liberation Sans", sans-serif; }
.note { height: 53px; overflow: hidden; white-space: nowrap; border-top: 1px solid #aaa; border-left: 1px solid #aaa; color: #aaa; font: 11px/12px "Noto Sans CJK SC", sans-serif; }
.run { display: block; width: 73px; margin: 12px 0 0 auto; }
.status { height: 18px; margin-top: 8px; border-top: 1px solid #aaa; border-left: 1px solid #aaa; }
.scroll { width: 11px; flex: none; margin: 0 6px 0 0; display: flex; flex-direction: column; align-items: center; background: #f0f0f0; }
.scroll svg { width: 8px; height: 8px; margin: 3px 0; }
.thumb { width: 100%; flex: 0 1 491px; margin-bottom: auto; border: 1px solid #aaa; background: linear-gradient(90deg, #f5f5f5, #c8c8c8); display: grid; place-items: center; }

.strip { width: 16px; flex: none; background: #dbe1f4; }
.stripbar { background: #f7f7f8; border-left: 1px solid #ccc; border-bottom: 1px solid #aaa; padding: 5px 0 12px; display: flex; flex-direction: column; }
.stripbar button { height: 16px; flex: none; display: grid; place-items: center; align-content: center; }
.stripbar svg { width: 14px; height: 14px; }
.stripbar hr { margin: 2px 0 3px; border: 0; border-top: 1px solid #aaa; width: 100%; }
.stripbar .txt { font: bold 6px/7px "Liberation Sans", sans-serif; }
.stripbar .all svg { width: 12px; height: 7px; }
.stripbar text { font: bold 11px "Liberation Serif", serif; fill: #111; }
.stripbar .small { font-size: 8px; }

.callout { position: absolute; left: 362px; top: 24px; width: 782px; }
.callout svg { width: 100%; }
.words { position: absolute; left: 5px; top: 0; width: 672px; color: #301020; font: 15px/19px "Noto Sans CJK SC", sans-serif; white-space: nowrap; }
.words p { font-feature-settings: "palt"; }
.words h3 { font: inherit; line-height: 29px; margin-bottom: 12px; }
.words b { font-size: 18px; font-weight: bold; }
.watermark { position: absolute; right: 8px; bottom: 4px; display: flex; flex-direction: column; align-items: flex-end; gap: 2px; color: #fff; text-shadow: 1px 1px 1px #666, -1px -1px 1px #999, 2px 2px 2px #888; }
.watermark strong { font: bold 29px/36px "Noto Sans CJK SC", sans-serif; }
.watermark span { font: bold 17px/22px "Liberation Sans", sans-serif; margin-right: 9px; }
```
